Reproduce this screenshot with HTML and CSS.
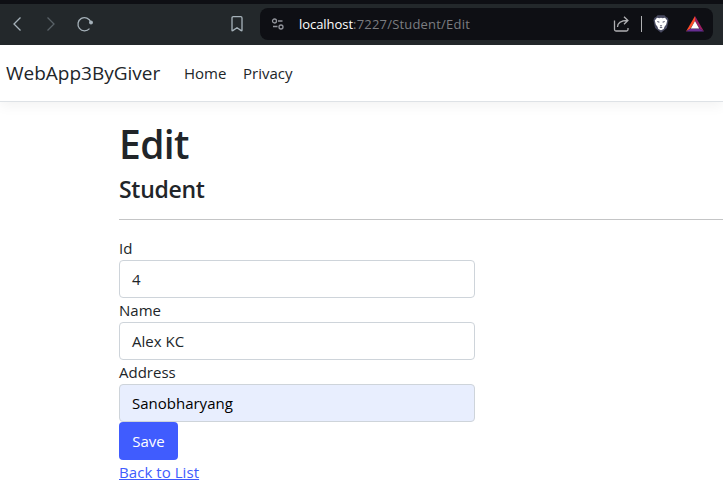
FILE: index.html
```html
<!DOCTYPE html>
<html lang="en">
<head>
<meta charset="utf-8">
<title>Edit - WebApp3ByGiver</title>
<link rel="stylesheet" href="styles.css">
</head>
<body>
<div class="toolbar">
  <svg class="icon back" width="16" height="16" viewBox="0 0 16 16"><path d="M11.500 1.500 5 8l6.500 6.500"/></svg>
  <svg class="icon forward" width="16" height="16" viewBox="0 0 16 16"><path d="M4.500 1.500 11 8l-6.500 6.500"/></svg>
  <svg class="icon reload" width="18" height="18" viewBox="0 0 18 18"><path d="M14.800 7A6.600 6.600 0 1 0 13.500 13.600"/><circle cx="15" cy="7.500" r="1.300"/></svg>
  <svg class="icon bookmark" width="14" height="18" viewBox="0 0 14 18"><path d="M2 3q0-1.300 1.300-1.300h7.400q1.300 0 1.300 1.300v12.300q0 .9-.8.300L7 12.800l-4.200 2.800q-.8.600-.8-.3z"/></svg>
  <div class="address">
    <svg class="icon tune" width="14" height="14" viewBox="0 0 14 14"><circle cx="3.500" cy="4" r="2"/><path d="M7 4h4.500M2 9.500h4.500"/><circle cx="10" cy="10" r="2"/></svg>
    <div class="url"><span class="host">localhost</span><span class="path">:7227/Student/Edit</span></div>
    <svg class="icon share" width="18" height="18" viewBox="0 0 18 18"><path d="M2.500 5.500v9q0 1.500 1.500 1.500h10.500q1.500 0 1.500-1.500v-1.500M5.500 12c0-4 3-6.500 10-6.500M12 1.800l3.900 3.700L12 9.300"/></svg>
    <span class="divider"></span>
    <svg class="shield" width="16" height="18" viewBox="0 0 16 18"><path fill="#484a60" d="M4.500.3h7l1.300 1.500 2.100 1.100.6 2.600-1.600 7.600L8 17.800l-5.900-4.700L.5 5.500l.6-2.600 2.100-1.100z"/><path fill="#fff" d="m4 2.800 2.500.4L8 2.800l1.500.4 2.500-.4L14.200 5.400l-1 4-1.700 2.300-.8 2.300L8 15.300 5.300 14l-.8-2.300-1.700-2.300-1-4z"/><path fill="#484a60" d="m4.200 6 2.300.7-.3 1-1.800-.6zM11.800 6l-2.300.7.3 1 1.800-.6zM6.800 10l1.200.5 1.200-.5-.8 1.500h-.8zM6.300 12.600l1.700-.6 1.700.6-1.700.7z"/></svg>
    <svg class="rewards" width="18" height="16" viewBox="0 0 18 16"><path fill="#ff4c29" d="M9 0v5L4.500 12.500 0 15.500z"/><path fill="#9e1f63" d="M9 0l9 15.500-4.500-3L9 5z"/><path fill="#662d91" d="M0 15.500l4.500-3h9l4.500 3z"/><path fill="#fff" d="M9 5l4.200 7.500H4.800z"/></svg>
  </div>
</div>
<nav class="navbar">
  <a class="brand">WebApp3ByGiver</a>
  <a class="navlink">Home</a>
  <a class="navlink">Privacy</a>
</nav>
<main class="content">
  <h1>Edit</h1>
  <h4>Student</h4>
  <hr>
  <form>
    <label class="label">Id</label>
    <div class="control">4</div>
    <label class="label">Name</label>
    <div class="control">Alex KC</div>
    <label class="label">Address</label>
    <div class="control autofill">Sanobharyang</div>
    <button class="save" type="button">Save</button>
  </form>
  <a class="list-link" href="#">Back to List</a>
</main>
</body>
</html>
```
FILE: styles.css
```css
* { box-sizing: border-box; }
body {
  margin: 0;
  height: 493px;
  overflow: hidden;
  background: #fff;
  color: #212529;
  font: 15px/24px "Open Sans", "Noto Sans", sans-serif;
}
.toolbar {
  height: 45px;
  padding: 0 10px 1px 9px;
  border-top: 4px solid #0e0f14;
  background: #23282b;
  display: flex;
  align-items: center;
}
.icon {
  flex: none;
  fill: none;
  stroke: #a6b2ba;
  stroke-width: 1.3;
}
.forward { margin-left: 18px; stroke: #596167; }
.reload { margin-left: 17px; }
.reload circle { fill: #a6b2ba; }
.bookmark { margin-left: 136px; }
.address {
  flex: 1;
  height: 32px;
  margin-left: 16px;
  padding: 0 9px 0 11px;
  border-radius: 8px;
  background: #0e0f14;
  display: flex;
  align-items: center;
}
.tune { stroke: #92949b; }
.url { flex: 1; margin-left: 14px; font-size: 13px; white-space: nowrap; }
.host { color: #fff; letter-spacing: -.05px; }
.path { color: #7c7d81; letter-spacing: .2px; }
.share { stroke: #b0b0b3; }
.divider { width: 1px; height: 16px; margin: 0 11px; background: #b0b0b3; }
.shield { margin-right: 17px; }
.navbar {
  height: 57px;
  padding-left: 6px;
  border-bottom: 1px solid #dee2e6;
  box-shadow: 0 4px 12px rgba(0, 0, 0, .05);
  display: flex;
  align-items: center;
}
.brand { width: 178px; font-size: 19px; }
.navlink { width: 59px; }
.content { padding: 18px 0 0 119px; }
h1, h4 { margin: 0; font-weight: 600; white-space: nowrap; }
h1 { font-size: 39px; line-height: 48px; letter-spacing: -.6px; }
h4 { margin-top: 7px; font-size: 23px; line-height: 29px; letter-spacing: -.3px; }
hr { margin: 15px 0 16px; border: 0; border-top: 1px solid #c4c5c6; }
.label { display: block; height: 24px; }
.control {
  width: 356px;
  height: 38px;
  padding: 6px 12px;
  border: 1px solid #ced4da;
  border-radius: 4px;
}
.autofill { background: #e8eefe; color: #000; }
.save {
  display: block;
  width: 59px;
  height: 38px;
  padding: 0;
  border: 0;
  border-radius: 4px;
  background: #405cfe;
  color: #fff;
  font: inherit;
}
.list-link { display: block; width: max-content; color: #405cfe; letter-spacing: .06px; }
```
